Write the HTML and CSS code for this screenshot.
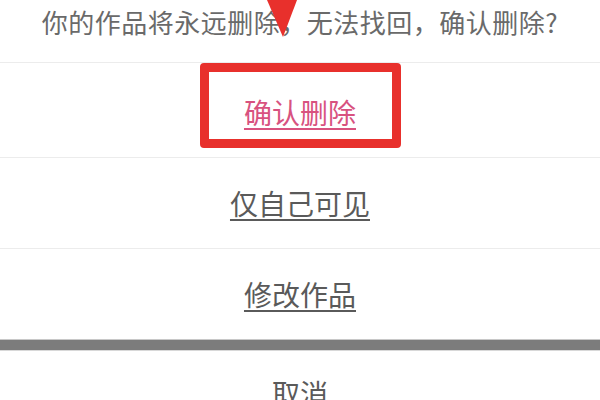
FILE: index.html
```html
<!DOCTYPE html>
<html lang="zh-CN">
<head>
<meta charset="utf-8">
<link rel="stylesheet" href="styles.css">
</head>
<body>
<div class="sheet">
  <div class="title">你的作品将永远删除，无法找回，确认删除?</div>
  <div class="option option-first">
    <div class="highlight"><span class="link danger">确认删除</span></div>
  </div>
  <div class="option"><span class="link">仅自己可见</span></div>
  <div class="option"><span class="link">修改作品</span></div>
  <div class="divider"></div>
  <div class="option cancel"><span class="plain">取消</span></div>
  <svg class="arrow" width="34" height="40" viewBox="0 0 34 40">
    <polygon points="1,0 31,0 17,37" fill="#e8302c"/>
  </svg>
</div>
</body>
</html>
```
FILE: styles.css
```css
html, body {
  margin: 0;
  padding: 0;
  background: #ffffff;
}
body {
  width: 600px;
  height: 400px;
  overflow: hidden;
  font-family: "Noto Sans CJK SC", "Noto Sans", sans-serif;
}
.sheet {
  position: relative;
  display: flex;
  flex-direction: column;
}
.title {
  height: 62px;
  box-sizing: border-box;
  padding-top: 3px;
  line-height: 38px;
  font-size: 26px;
  color: #6a6a6a;
  text-align: center;
  letter-spacing: 0.5px;
}
.option {
  height: 91px;
  box-sizing: border-box;
  border-top: 1px solid #ececec;
  display: flex;
  align-items: center;
  justify-content: center;
  font-size: 28px;
  color: #5a5a5a;
}
.option-first {
  height: 95px;
  align-items: flex-start;
}
.highlight {
  width: 201px;
  height: 85px;
  box-sizing: border-box;
  border: 9px solid #e8302c;
  border-radius: 4px;
  display: flex;
  align-items: center;
  justify-content: center;
  padding-top: 12px;
}
.link {
  text-decoration: underline;
  text-decoration-thickness: 2px;
  text-underline-offset: 4px;
  line-height: 36px;
}
.danger {
  color: #d8527f;
}
.divider {
  height: 12px;
  background: #7c7c7c;
  border-top: 1px solid #c8c8c8;
  border-bottom: 1px solid #d8d8d8;
  box-sizing: border-box;
}
.cancel {
  border-top: none;
  align-items: flex-start;
  padding-top: 24px;
}
.plain {
  line-height: 36px;
}
.arrow {
  position: absolute;
  left: 266px;
  top: 0;
}
```
